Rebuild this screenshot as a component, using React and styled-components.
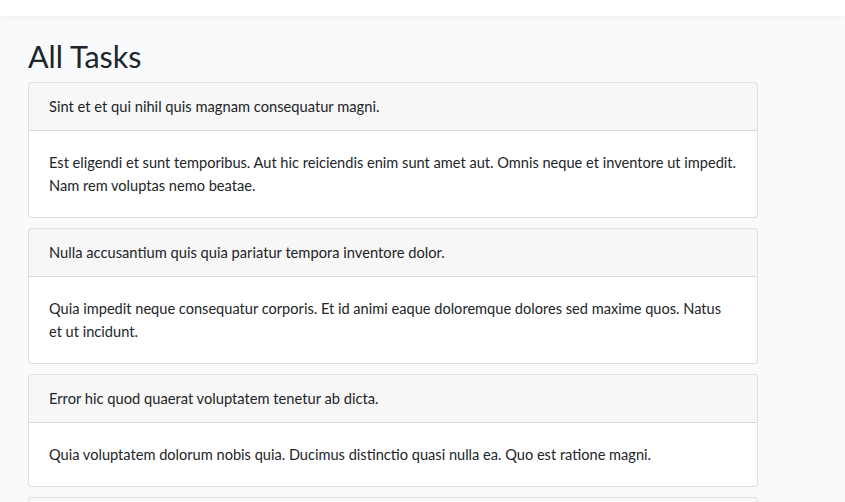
import React from "react";
import styled, { createGlobalStyle } from "styled-components";

const GlobalStyle = createGlobalStyle`
  * { box-sizing: border-box; }
  body {
    margin: 0;
    background: #f8fafc;
    color: #212529;
    font-family: Lato, "Noto Sans", sans-serif;
    font-size: 14.7px;
    line-height: 23px;
  }
`;

const tasks = [
  {
    id: 1,
    title: "Sint et et qui nihil quis magnam consequatur magni.",
    body: "Est eligendi et sunt temporibus. Aut hic reiciendis enim sunt amet aut. Omnis neque et inventore ut impedit. Nam rem voluptas nemo beatae.",
  },
  {
    id: 2,
    title: "Nulla accusantium quis quia pariatur tempora inventore dolor.",
    body: "Quia impedit neque consequatur corporis. Et id animi eaque doloremque dolores sed maxime quos. Natus et ut incidunt.",
  },
  {
    id: 3,
    title: "Error hic quod quaerat voluptatem tenetur ab dicta.",
    body: "Quia voluptatem dolorum nobis quia. Ducimus distinctio quasi nulla ea. Quo est ratione magni.",
  },
  {
    id: 4,
    title: "Voluptas quia aut minima et ut.",
    body: "Ut sed et nihil. Dolorem quis aut et.",
  },
];

const Navbar = styled.nav`
  height: 16px;
  background: #fff;
  box-shadow: 0 2px 4px rgba(0, 0, 0, 0.04);
`;

const Main = styled.main`
  padding: 22px 0 0 28px;
  height: calc(100vh - 16px);
  overflow: hidden;
`;

const Title = styled.h1`
  margin: 0 0 8px;
  font-size: 30.5px;
  font-weight: 400;
  line-height: 36px;
`;

const List = styled.div`
  width: 730px;
  display: flex;
  flex-direction: column;
  gap: 10px;
`;

const Card = styled.div`
  background: #fff;
  border: 1px solid rgba(0, 0, 0, 0.125);
  border-radius: 4px;
`;

const CardHeader = styled.div`
  padding: 12px 20px;
  background: rgba(0, 0, 0, 0.03);
  border-bottom: 1px solid rgba(0, 0, 0, 0.125);
  border-radius: 3px 3px 0 0;
`;

const CardBody = styled.div`
  padding: 20px;
  font-size: 14.6px;
`;

export default function App() {
  return (
    <>
      <GlobalStyle />
      <Navbar />
      <Main>
        <Title>All Tasks</Title>
        <List>
          {tasks.map((t) => (
            <Card key={t.id}>
              <CardHeader>{t.title}</CardHeader>
              <CardBody>{t.body}</CardBody>
            </Card>
          ))}
        </List>
      </Main>
    </>
  );
}
